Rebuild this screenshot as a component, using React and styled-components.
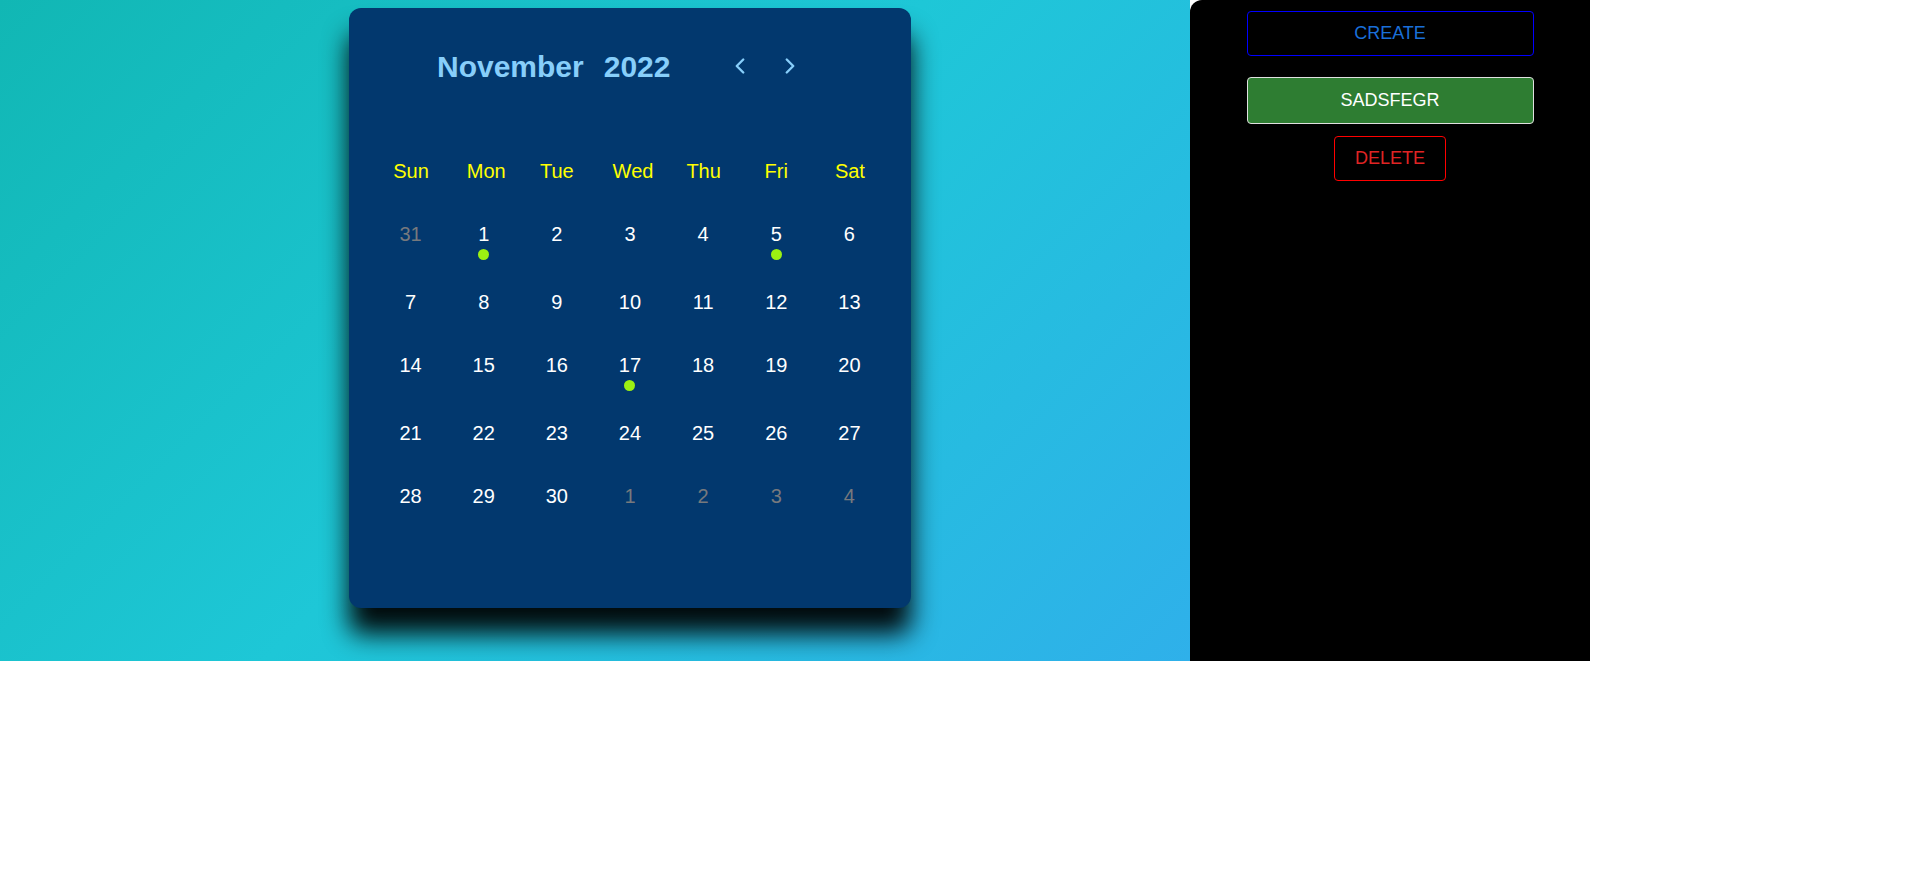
import React from 'react';
import styled, { createGlobalStyle } from 'styled-components';
import { ChevronLeft, ChevronRight } from 'lucide-react';

const GlobalStyle = createGlobalStyle`
  body {
    margin: 0;
    background: #fff;
    font-family: "Liberation Sans", Arial, sans-serif;
  }
`;

const Page = styled.div`
  display: flex;
  width: 1590px;
  height: 661px;
`;

const Stage = styled.div`
  flex: 1;
  padding: 8px 0 0 349px;
  background: linear-gradient(135deg, #11b7b4 0%, #1ec7d7 50%, #2fb0ea 100%);
`;

const Card = styled.div`
  box-sizing: border-box;
  width: 562px;
  height: 600px;
  padding: 41.5px 25px 0;
  background: #02386e;
  border-radius: 12px;
  box-shadow: 0 26px 26px rgba(0, 0, 0, 0.95);
`;

const Header = styled.div`
  display: flex;
  align-items: center;
  height: 35px;
  padding-left: 63px;
  color: #87cefa;
`;

const Title = styled.span`
  font-size: 30px;
  font-weight: bold;
  margin-right: ${props => props.gap || 0}px;
`;

const NavButton = styled.button`
  display: flex;
  align-items: center;
  justify-content: center;
  width: 30px;
  height: 30px;
  padding: 0;
  margin-left: ${props => props.offset}px;
  margin-top: -3px;
  border: none;
  background: transparent;
  color: #87cefa;
  cursor: pointer;
`;

const Grid = styled.div`
  display: grid;
  grid-template-columns: repeat(7, 1fr);
  width: 512px;
`;

const WeekRow = styled(Grid)`
  margin-top: 75.5px;
`;

const WeekDay = styled.div`
  text-align: center;
  font-size: 20px;
  line-height: 23px;
  color: #ffff00;
  padding-left: ${props => props.shift || 0}px;
`;

const DaysGrid = styled(Grid)`
  margin-top: 40px;
  row-gap: 30.5px;
`;

const Day = styled.div`
  display: flex;
  flex-direction: column;
  align-items: center;
  min-height: 33px;
  font-size: 20px;
  line-height: 23px;
  color: ${props => (props.muted ? '#77797d' : '#ffffff')};
`;

const Dot = styled.span`
  width: 11px;
  height: 11px;
  margin-top: 3px;
  border-radius: 50%;
  background: #9cf112;
`;

const Sidebar = styled.div`
  width: 400px;
  display: flex;
  flex-direction: column;
  align-items: center;
  padding-top: 11px;
  box-sizing: border-box;
  background: #000;
  border-top-left-radius: 12px;
`;

const Button = styled.button`
  box-sizing: border-box;
  width: ${props => (props.wide ? '287px' : 'auto')};
  height: ${props => props.h || 45}px;
  margin-top: ${props => props.mt || 0}px;
  padding: 0 20px;
  border: 1px solid ${props => props.border};
  border-radius: 4px;
  background: ${props => props.bg || 'transparent'};
  color: ${props => props.color};
  font-family: "Liberation Sans", Arial, sans-serif;
  font-size: 18px;
  text-transform: uppercase;
  cursor: pointer;
`;

// header labels sit a little off the day columns in the original
const weekDays = [
  ['Sun', 1],
  ['Mon', 5],
  ['Tue', 0],
  ['Wed', 6],
  ['Thu', 1],
  ['Fri', 0],
  ['Sat', 1]
];
const events = [1, 5, 17];

const days = [{ n: 31, muted: true }]
  .concat(Array.from({ length: 30 }, (_, i) => ({ n: i + 1 })))
  .concat([1, 2, 3, 4].map(n => ({ n, muted: true })));

export default function App() {
  return (
    <>
      <GlobalStyle />
      <Page>
        <Stage>
          <Card>
            <Header>
              <Title gap={20}>November</Title>
              <Title>2022</Title>
              <NavButton offset={55}>
                <ChevronLeft size={26} strokeWidth={2.2} />
              </NavButton>
              <NavButton offset={20}>
                <ChevronRight size={26} strokeWidth={2.2} />
              </NavButton>
            </Header>
            <WeekRow>
              {weekDays.map(([d, shift]) => (
                <WeekDay key={d} shift={shift}>{d}</WeekDay>
              ))}
            </WeekRow>
            <DaysGrid>
              {days.map((d, i) => (
                <Day key={i} muted={d.muted}>
                  <span>{d.n}</span>
                  {!d.muted && events.includes(d.n) && <Dot />}
                </Day>
              ))}
            </DaysGrid>
          </Card>
        </Stage>
        <Sidebar>
          <Button wide border="#0000ff" color="#1a6fd8">Create</Button>
          <Button wide h={47} mt={21} border="#e0e0e0" bg="#2e7d32" color="#ffffff">sadsfegr</Button>
          <Button mt={12} border="#ff0000" color="#e02424">Delete</Button>
        </Sidebar>
      </Page>
    </>
  );
}
